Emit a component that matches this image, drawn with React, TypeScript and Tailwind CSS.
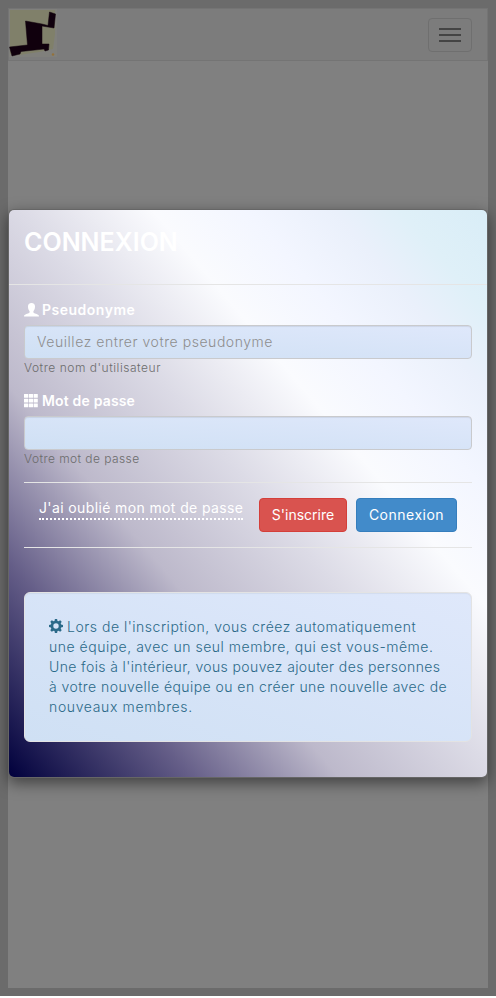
import React from "react";

function UserIcon() {
  return (
    <svg className="inline-block h-[14px] w-[15px]" viewBox="0 0 15 14" fill="currentColor">
      <path d="M7.500 0C9.800 0 11 1.400 11 3.600c0 2-.6 3.600-1.600 4.700v1.200c.6.7 2.300 1.100 3.700 1.700 1.300.5 1.900 1 1.900 2.300H0c0-1.300.6-1.800 1.900-2.300 1.400-.6 3.100-1 3.700-1.700V8.300C4.600 7.200 4 5.600 4 3.600 4 1.400 5.200 0 7.500 0z" />
    </svg>
  );
}

function GridIcon() {
  return (
    <svg className="inline-block h-[14px] w-[14px]" viewBox="0 0 14 14" fill="currentColor">
      {[0, 4.7, 9.4].map((y) =>
        [0, 4.8, 9.6].map((x) => <rect key={`${x}-${y}`} x={x} y={y} width="4.200" height="3.800" rx="0.3" />)
      )}
    </svg>
  );
}

function CogIcon() {
  return (
    <svg className="relative -top-px mr-[4px] inline-block h-[14px] w-[14px] shrink-0" viewBox="0 0 14 14" fill="currentColor">
      <path
        fillRule="evenodd"
        d="M5.900 0h2.200l.4 1.900 1 .4L11.200 1.300l1.500 1.500-1 1.700.4 1 1.900.4v2.200l-1.900.4-.4 1 1 1.700-1.500 1.500-1.700-1-1 .4L8.100 14H5.900l-.4-1.900-1-.4-1.700 1-1.500-1.500 1-1.700-.4-1L0 8.100V5.900l1.900-.4.4-1-1-1.700 1.500-1.500 1.700 1 1-.4zM7 4.300a2.700 2.700 0 1 0 0 5.400 2.700 2.700 0 0 0 0-5.400z"
      />
    </svg>
  );
}

function Logo() {
  return (
    <svg className="h-[48px] w-[48px]" viewBox="0 0 48 48">
      <rect width="48" height="48" fill="#80807c" />
      <path d="M1 1H46L46 25 44 40 30 43 10 46 1 45z" fill="#80806a" />
      <path
        d="M40.500 3L46.500 5 45 19 39 18 33 17V35L40 35 39.500 41 36 42 35 40 12 42.500 11 45 3 47 0.500 38 18.500 36 16.500 12 33 15 39 16.500z"
        fill="#10000d"
        stroke="#10000d"
        strokeWidth="0.5"
        strokeLinejoin="round"
      />
      <circle cx="44" cy="45.500" r="1.200" fill="#94713a" />
    </svg>
  );
}

const fieldStyle =
  "h-[34px] w-full rounded-[4px] border border-[#c9cacd] bg-[linear-gradient(to_top_right,#cfe0f4,#dfe8fb)] px-3 text-[14px] text-[#999] shadow-[inset_0_1px_1px_rgba(0,0,0,0.075)] outline-none";

export default function App() {
  return (
    <div className="h-[998px] bg-white font-['Inter',sans-serif] text-[14px] leading-5">
      <div className="relative h-[996px] overflow-hidden bg-[#6b6b6b] p-2">
        <div className="h-[980px] bg-[#808080]">
          <nav className="flex h-[53px] items-start justify-between border border-[#747474] bg-[#7c7c7c] pr-[15px]">
            <Logo />
            <button className="mt-[9px] flex h-[34px] w-[44px] flex-col items-center justify-center gap-1 rounded-[4px] border border-[#6f6f6f]">
              <span className="h-[2px] w-[22px] bg-[#444]" />
              <span className="h-[2px] w-[22px] bg-[#444]" />
              <span className="h-[2px] w-[22px] bg-[#444]" />
            </button>
          </nav>
        </div>

        <div
          role="dialog"
          className="absolute top-[209px] left-2 h-[569px] w-[480px] rounded-[6px] border border-black/20 bg-[linear-gradient(to_top_right,#00003c_0%,#655e88_19%,#bdb9cb_34.5%,#dcdbe6_51%,#fafbfe_65%,#f3f6ff_75%,#eaf0fb_84%,#dff0f8_91%,#d9edf7_100%)] bg-clip-padding shadow-[0_5px_15px_rgba(0,0,0,0.5)]"
        >
          <header className="h-[75px] border-b border-[#e5e5e5] px-[15px] pt-[15px]">
            <h1 className="text-[25px] leading-[34px] font-semibold tracking-[0px] whitespace-nowrap text-white">
              CONNEXION
            </h1>
          </header>
          <main className="px-[15px] pt-[15px]">
            <label className="flex h-5 items-center gap-[3px] font-semibold whitespace-nowrap text-white">
              <UserIcon />
              <span className="tracking-[0.5px]">Pseudonyme</span>
            </label>
            <input
              type="text"
              placeholder="Veuillez entrer votre pseudonyme"
              className={`mt-[5px] block pb-[2px] font-light tracking-[0.55px] placeholder:text-[#8e8e8e] ${fieldStyle}`}
            />
            <p className="h-[17px] text-[12px] leading-[17px] font-light tracking-[0.52px] whitespace-nowrap text-[#6c6c6c]">
              Votre nom d'utilisateur
            </p>
            <label className="mt-[15px] flex h-5 items-center gap-[4px] font-semibold whitespace-nowrap text-white">
              <GridIcon />
              <span className="tracking-[0.17px]">Mot de passe</span>
            </label>
            <input type="password" className={`mt-[5px] block ${fieldStyle}`} />
            <p className="h-[17px] text-[12px] leading-[17px] font-light tracking-[0.42px] whitespace-nowrap text-[#6c6c6c]">
              Votre mot de passe
            </p>
            <div className="mt-[15px] flex h-[66px] items-start border-y border-[#e5e5e5] px-[15px] pt-[15px] whitespace-nowrap">
              <a className="block h-[22px] w-[204px] border-b-2 border-dotted border-white tracking-[0.38px] text-white">
                J'ai oublié mon mot de passe
              </a>
              <button className="ml-4 h-[34px] w-[88px] rounded-[4px] border border-[#d43f3a] bg-[#d9534f] text-white">
                S'inscrire
              </button>
              <button className="ml-[9px] h-[34px] w-[101px] rounded-[4px] border border-[#357ebd] bg-[#428bca] tracking-[0.5px] text-white">
                Connexion
              </button>
            </div>
            <section className="mt-11 h-[150px] rounded-[6px] border border-[#e3e3e3] bg-[linear-gradient(to_top_right,#cfe0f4,#dfe8fb)] px-6 pt-6 font-light whitespace-nowrap text-[#2b6a89] shadow-[inset_0_1px_1px_rgba(0,0,0,0.05)]">
              <div className="flex items-center tracking-[0.51px]">
                <CogIcon />
                <span>Lors de l'inscription, vous créez automatiquement</span>
              </div>
              <div className="tracking-[0.51px]">une équipe, avec un seul membre, qui est vous-même.</div>
              <div className="tracking-[0.38px]">Une fois à l'intérieur, vous pouvez ajouter des personnes</div>
              <div className="tracking-[0.44px]">à votre nouvelle équipe ou en créer une nouvelle avec de</div>
              <div className="tracking-[0.64px]">nouveaux membres.</div>
            </section>
          </main>
        </div>
      </div>
    </div>
  );
}
